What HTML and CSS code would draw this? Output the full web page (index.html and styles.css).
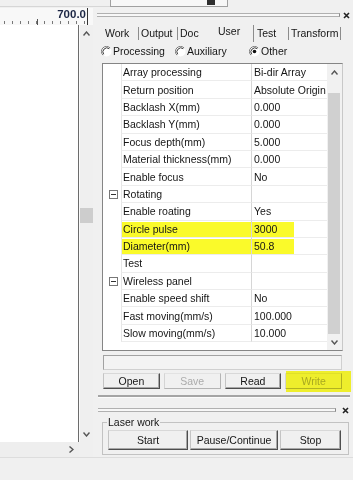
FILE: index.html
```html
<!DOCTYPE html>
<html>
<head>
<meta charset="utf-8">
<link rel="stylesheet" href="styles.css">
</head>
<body>
<div class="top">
  <div class="top-left"></div>
  <div class="combo"><span class="combo-btn"></span></div>
</div>
<div class="main">
  <div class="left">
    <div class="ruler"><span class="ruler-val">700.0</span><span class="ruler-cursor"></span></div>
    <div class="canvas-row">
      <div class="canvas"></div>
      <div class="vscroll">
        <div class="sb-arrow"><svg width="7" height="5" viewBox="0 0 7 5"><polyline points="0.5,4.5 3.5,1 6.5,4.5" fill="none" stroke="#555" stroke-width="1.4"/></svg></div>
        <div class="vs-track"><div class="vs-thumb"></div></div>
        <div class="sb-arrow"><svg width="7" height="5" viewBox="0 0 7 5"><polyline points="0.5,0.5 3.5,4 6.5,0.5" fill="none" stroke="#555" stroke-width="1.4"/></svg></div>
      </div>
    </div>
    <div class="hscroll">
      <div class="hs-bar"><div class="hs-arrow"><svg width="5" height="7" viewBox="0 0 5 7"><polyline points="0.5,0.5 4,3.5 0.5,6.5" fill="none" stroke="#555" stroke-width="1.4"/></svg></div></div>
      <div class="hs-corner"></div>
    </div>
  </div>

  <div class="right">
    <div class="grip">
      <div class="grip-line"></div>
      <svg class="close" width="7" height="7" viewBox="0 0 7 7"><path d="M1 1L6 6M6 1L1 6" stroke="#222" stroke-width="1.6"/></svg>
    </div>

    <div class="tabs">
      <div class="tab tab-work">Work</div>
      <div class="tab tab-output">Output</div>
      <div class="tab tab-doc">Doc</div>
      <div class="tab tab-user">User</div>
      <div class="tab tab-test">Test</div>
      <div class="tab tab-transform">Transform</div>
    </div>

    <div class="radios">
      <div class="radio">
        <svg width="11" height="11" viewBox="0 0 11 11"><circle cx="5.5" cy="5.5" r="5" fill="#fff"/><path d="M9.1 1.9A5 5 0 0 0 1.9 9.1" fill="none" stroke="#7a7a7a"/><path d="M8.3 2.7A4 4 0 0 0 2.7 8.3" fill="none" stroke="#3a3a3a"/></svg>
        <span>Processing</span>
      </div>
      <div class="radio">
        <svg width="11" height="11" viewBox="0 0 11 11"><circle cx="5.5" cy="5.5" r="5" fill="#fff"/><path d="M9.1 1.9A5 5 0 0 0 1.9 9.1" fill="none" stroke="#7a7a7a"/><path d="M8.3 2.7A4 4 0 0 0 2.7 8.3" fill="none" stroke="#3a3a3a"/></svg>
        <span>Auxiliary</span>
      </div>
      <div class="radio">
        <svg width="11" height="11" viewBox="0 0 11 11"><circle cx="5.5" cy="5.5" r="5" fill="#fff"/><path d="M9.1 1.9A5 5 0 0 0 1.9 9.1" fill="none" stroke="#7a7a7a"/><path d="M8.3 2.7A4 4 0 0 0 2.7 8.3" fill="none" stroke="#3a3a3a"/><circle cx="5.5" cy="5.5" r="1.8" fill="#111"/></svg>
        <span>Other</span>
      </div>
    </div>

    <div class="pgrid">
      <div class="pg-rows">
        <div class="pg-row"><div class="pg-gut"></div><div class="pg-name">Array processing</div><div class="pg-val">Bi-dir Array</div></div>
        <div class="pg-row"><div class="pg-gut"></div><div class="pg-name">Return position</div><div class="pg-val">Absolute Origin</div></div>
        <div class="pg-row"><div class="pg-gut"></div><div class="pg-name">Backlash X(mm)</div><div class="pg-val">0.000</div></div>
        <div class="pg-row"><div class="pg-gut"></div><div class="pg-name">Backlash Y(mm)</div><div class="pg-val">0.000</div></div>
        <div class="pg-row"><div class="pg-gut"></div><div class="pg-name">Focus depth(mm)</div><div class="pg-val">5.000</div></div>
        <div class="pg-row"><div class="pg-gut"></div><div class="pg-name">Material thickness(mm)</div><div class="pg-val">0.000</div></div>
        <div class="pg-row"><div class="pg-gut"></div><div class="pg-name">Enable focus</div><div class="pg-val">No</div></div>
        <div class="pg-row"><div class="pg-gut"><span class="expander"></span></div><div class="pg-name">Rotating</div><div class="pg-val"></div></div>
        <div class="pg-row"><div class="pg-gut"></div><div class="pg-name">Enable roating</div><div class="pg-val">Yes</div></div>
        <div class="pg-row hl"><div class="pg-gut"></div><div class="pg-name">Circle pulse</div><div class="pg-val">3000</div></div>
        <div class="pg-row hl"><div class="pg-gut"></div><div class="pg-name">Diameter(mm)</div><div class="pg-val">50.8</div></div>
        <div class="pg-row"><div class="pg-gut"></div><div class="pg-name">Test</div><div class="pg-val"></div></div>
        <div class="pg-row"><div class="pg-gut"><span class="expander"></span></div><div class="pg-name">Wireless panel</div><div class="pg-val"></div></div>
        <div class="pg-row"><div class="pg-gut"></div><div class="pg-name">Enable speed shift</div><div class="pg-val">No</div></div>
        <div class="pg-row"><div class="pg-gut"></div><div class="pg-name">Fast moving(mm/s)</div><div class="pg-val">100.000</div></div>
        <div class="pg-row"><div class="pg-gut"></div><div class="pg-name">Slow moving(mm/s)</div><div class="pg-val">10.000</div></div>
      </div>
      <div class="pg-scroll">
        <div class="sb-arrow"><svg width="7" height="5" viewBox="0 0 7 5"><polyline points="0.5,4.5 3.5,1 6.5,4.5" fill="none" stroke="#555" stroke-width="1.4"/></svg></div>
        <div class="pg-track"><div class="pg-thumb"></div></div>
        <div class="sb-arrow"><svg width="7" height="5" viewBox="0 0 7 5"><polyline points="0.5,0.5 3.5,4 6.5,0.5" fill="none" stroke="#555" stroke-width="1.4"/></svg></div>
      </div>
    </div>

    <div class="desc"></div>

    <div class="btnrow">
      <div class="btn">Open</div>
      <div class="btn disabled">Save</div>
      <div class="btn">Read</div>
      <div class="btn disabled btn-hl">Write</div>
    </div>

    <div class="sep"></div>

    <div class="grip grip2">
      <div class="grip-line"></div>
      <svg class="close" width="7" height="7" viewBox="0 0 7 7"><path d="M1 1L6 6M6 1L1 6" stroke="#222" stroke-width="1.6"/></svg>
    </div>

    <fieldset class="group">
      <legend>Laser work</legend>
      <div class="group-btns">
        <div class="btn gbtn-start">Start</div>
        <div class="btn gbtn-pause">Pause/Continue</div>
        <div class="btn gbtn-stop">Stop</div>
      </div>
    </fieldset>
  </div>
</div>
<div class="bottom"></div>
</body>
</html>
```
FILE: styles.css
```css
* { box-sizing: border-box; }
body {
  margin: 0;
  width: 353px;
  height: 480px;
  overflow: hidden;
  background: #f0f0f0;
  font-family: "Liberation Sans", Arial, sans-serif;
  font-size: 10.5px;
  color: #151515;
}

/* top cut-off toolbar */
.top { height: 8px; display: flex; }
.top-left { width: 110px; height: 7px; border-bottom: 1px solid #d6d6d6; }
.combo {
  width: 118px; height: 7px;
  border: 1px solid #a0a0a0; border-top: none;
  background: #f7f7f7;
  display: flex; justify-content: flex-end; align-items: flex-start;
  padding-right: 12px;
}
.combo-btn { width: 8px; height: 5px; background: #2e2e2e; }

.main { display: flex; height: 449px; }

/* left canvas pane */
.left { width: 93px; display: flex; flex-direction: column; }
.ruler {
  height: 17px;
  display: flex; justify-content: flex-end; align-items: flex-start;
  padding-right: 5px;
  background:
    linear-gradient(#555, #555) 37px 11px / 1px 6px no-repeat,
    repeating-linear-gradient(to right, transparent 0 4px, #777 4px 5px, transparent 5px 8px) 0 13px / 86px 3px no-repeat,
    #f8f8f8;
}
.ruler-val {
  font-weight: bold; font-size: 11.5px; line-height: 11px;
  color: #1d2745; padding-top: 1px; margin-right: 1px;
}
.ruler-cursor { width: 1px; height: 17px; background: #333; }

.canvas-row { display: flex; height: 417px; }
.canvas { flex: 1; background: #fff; border-right: 1px solid #6c6c6c; }
.vscroll {
  width: 14px; display: flex; flex-direction: column; align-items: center;
  background: #efefef; border-left: 1px solid #fafafa;
}
.sb-arrow { height: 16px; width: 100%; display: flex; align-items: center; justify-content: center; flex-shrink: 0; }
.vs-track { flex: 1; width: 100%; }
.vs-thumb { margin-top: 167px; height: 15px; width: 100%; background: #cdcdcd; }

.hscroll { height: 15px; display: flex; }
.hs-bar { width: 79px; display: flex; justify-content: flex-end; background: #eeeeee; }
.hs-arrow { width: 15px; display: flex; align-items: center; justify-content: center; }
.hs-corner { flex: 1; background: #efefef; }

/* right pane */
.right { width: 260px; display: flex; flex-direction: column; }

.grip { height: 14px; display: flex; align-items: center; padding: 0 3px 0 4px; gap: 3px; flex-shrink: 0; }
.grip-line {
  flex: 1; height: 4px;
  border-top: 1px solid #b0b0b0; border-bottom: 1px solid #b0b0b0;
  border-right: 1px solid #8a8a8a;
  background: #f7f7f7;
}
.close { flex-shrink: 0; }
.grip2 { margin-top: 6px; height: 12px; padding: 0 4px 0 5px; gap: 6px; }

.tabs { height: 20px; display: flex; padding-left: 9px; flex-shrink: 0; }
.tab {
  margin-top: 5px; margin-bottom: 2px;
  line-height: 12px; padding-left: 3px;
  border-right: 1px solid #8c8c8c;
  white-space: nowrap;
}
.tab-work { width: 37px; }
.tab-output { width: 39px; padding-left: 2px; }
.tab-doc { width: 32px; padding-left: 2px; border-right-color: transparent; }
.tab-user { width: 44px; padding-left: 8px; margin-top: 3px; margin-bottom: 0; }
.tab-test { width: 35px; }
.tab-transform { width: 52px; padding-left: 2px; }

.radios { height: 14px; margin-top: 2px; display: flex; align-items: center; padding-left: 8px; flex-shrink: 0; }
.radio { width: 74px; display: flex; align-items: center; gap: 1px; }
.radio svg { flex-shrink: 0; }

/* property grid */
.pgrid {
  margin: 5px 0 0 9px;
  width: 241px; height: 288px;
  border: 1px solid #858585; border-right-color: #c8c8c8;
  background: #fff;
  display: flex; flex-shrink: 0;
}
.pg-rows { flex: 1; display: flex; flex-direction: column; }
.pg-row { height: 17.4px; display: flex; flex-shrink: 0; }
.pg-gut { width: 18px; display: flex; align-items: center; padding-left: 6px; }
.expander {
  width: 9px; height: 9px; border: 1px solid #777;
  background: linear-gradient(#333, #333) center / 5px 1px no-repeat;
}
.pg-name {
  width: 131px;
  border-left: 1px solid #e6e6e6; border-right: 1px solid #d6d6d6; border-bottom: 1px solid #ececec;
  padding-left: 1px;
  display: flex; align-items: center; white-space: nowrap; overflow: hidden;
}
.pg-val {
  width: 75px;
  border-bottom: 1px solid #ececec;
  padding-left: 2px;
  display: flex; align-items: center; white-space: nowrap; overflow: hidden;
}
.hl .pg-name { background: linear-gradient(#fafa2a, #fafa2a) 0 1px / 100% 15px no-repeat; }
.hl .pg-val { background: linear-gradient(#fafa2a, #fafa2a) 0 1px / 42px 15px no-repeat; }

.pg-scroll { width: 15px; display: flex; flex-direction: column; background: #f1f1f1; }
.pg-track { flex: 1; display: flex; flex-direction: column; padding: 13px 2px 0 1px; }
.pg-thumb { flex: 1; background: #d0d0d0; }

.desc {
  margin: 4px 0 0 10px; width: 239px; height: 15px; flex-shrink: 0;
  border: 1px solid #a2a2a2; border-right-color: #d0d0d0; border-bottom-color: #d0d0d0;
  background: #f3f3f3;
}

.btnrow { margin: 3px 0 0 10px; width: 239px; height: 16px; display: flex; gap: 4px; flex-shrink: 0; }
.btn {
  flex: 1;
  background: #f0f0f0;
  border: 1px solid; border-color: #d8d8d8 #4e4e4e #4e4e4e #c4c4c4;
  box-shadow: inset -1px -1px 0 #a8a8a8;
  text-align: center; line-height: 14px; white-space: nowrap;
}
.btn.disabled { color: #ababab; border-color: #e2e2e2 #b4b4b4 #b4b4b4 #d4d4d4; box-shadow: none; }
.btn-hl { position: relative; }
.btn-hl::after {
  content: ""; position: absolute;
  left: 0; right: -10px; top: -3px; bottom: -4px;
  background: #fdfd2e; mix-blend-mode: multiply;
}

.sep {
  margin: 6px 3px 0 5px; height: 3px; flex-shrink: 0;
  border-top: 2px solid #a4a4a4; border-bottom: 1px solid #fbfbfb;
}

fieldset.group {
  margin: 0 0 0 9px; width: 247px; min-width: 0;
  border: 1px solid #c2c2c2;
  padding: 1px 7px 4px 5px;
}
fieldset.group legend { padding: 0 1px; margin-left: -1px; line-height: 13px; }
.group-btns { display: flex; gap: 2px; height: 20px; }
.group-btns .btn { flex: none; line-height: 18px; }
.gbtn-start { width: 80px; }
.gbtn-pause { width: 88px; }
.gbtn-stop { width: 61px; }

.bottom { height: 23px; border-top: 1px solid #dddddd; background: #f0f0f0; }
```
